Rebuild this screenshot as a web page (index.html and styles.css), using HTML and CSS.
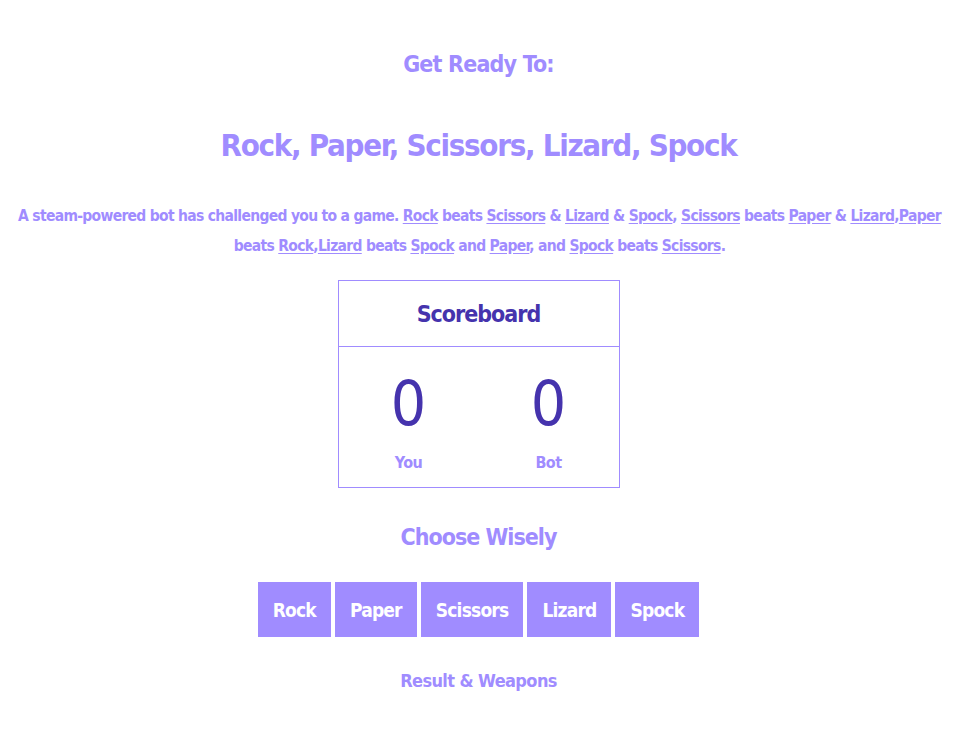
FILE: index.html
```html
<!DOCTYPE html>
<html>
<head>
<meta charset="utf-8">
<link rel="stylesheet" href="styles.css">
</head>
<body>
<main class="page">
  <h2 class="pre">Get Ready To:</h2>
  <h1 class="title">Rock, Paper, Scissors, Lizard, Spock</h1>
  <p class="rules">A steam-powered bot has challenged you to a game. <u>Rock</u> beats <u>Scissors</u> &amp; <u>Lizard</u> &amp; <u>Spock</u>, <u>Scissors</u> beats <u>Paper</u> &amp; <u>Lizard</u>,<u>Paper</u> beats <u>Rock</u>,<u>Lizard</u> beats <u>Spock</u> and <u>Paper</u>, and <u>Spock</u> beats <u>Scissors</u>.</p>
  <section class="board">
    <div class="board-head">Scoreboard</div>
    <div class="board-body">
      <div class="score"><div class="num">0</div><div class="who">You</div></div>
      <div class="score"><div class="num">0</div><div class="who">Bot</div></div>
    </div>
  </section>
  <h3 class="choose">Choose Wisely</h3>
  <div class="buttons">
    <button class="btn">Rock</button>
    <button class="btn">Paper</button>
    <button class="btn">Scissors</button>
    <button class="btn">Lizard</button>
    <button class="btn">Spock</button>
  </div>
  <h4 class="result">Result &amp; Weapons</h4>
</main>
</body>
</html>
```
FILE: styles.css
```css
* { box-sizing: border-box; }
body {
  margin: 0;
  background: #fff;
  font-family: "DejaVu Sans Condensed", "Liberation Sans", sans-serif;
  font-weight: bold;
  color: #a08cff;
}
.page {
  display: flex;
  flex-direction: column;
  align-items: center;
  text-align: center;
  padding: 44px 5px 0 0;
}
.pre {
  margin: 0;
  font-size: 23px;
  line-height: 40px;
  letter-spacing: -0.8px;
}
.title {
  margin: 36px 0 0;
  font-size: 31px;
  line-height: 50px;
  letter-spacing: -1.3px;
}
.rules {
  margin: 31px 8px 0 10px;
  font-size: 15.5px;
  line-height: 30px;
  letter-spacing: -0.7px;
}
.rules u { text-underline-offset: 2px; }
.board {
  margin-top: 19px;
  width: 282px;
  border: 1px solid #a08cff;
}
.board-head {
  height: 66px;
  display: flex;
  align-items: center;
  justify-content: center;
  border-bottom: 1px solid #a08cff;
  color: #4533ad;
  font-size: 23px;
  letter-spacing: -1px;
}
.board-body {
  display: grid;
  grid-template-columns: 1fr 1fr;
  padding: 22px 0 9px;
}
.score { display: flex; flex-direction: column; align-items: center; gap: 9px; }
.num {
  color: #4533ad;
  font-size: 62px;
  line-height: 70px;
  font-weight: normal;
}
.who {
  font-size: 16px;
  line-height: 30px;
  letter-spacing: -0.5px;
}
.choose {
  margin: 29px 0 0;
  font-size: 23px;
  line-height: 40px;
  letter-spacing: -1px;
}
.buttons {
  margin-top: 25px;
  display: flex;
  gap: 4px;
}
.btn {
  border: 0;
  background: #a08cff;
  color: #fff;
  font-family: inherit;
  font-weight: bold;
  font-size: 19px;
  letter-spacing: -0.8px;
  height: 55px;
  padding: 0 15px;
}
.result {
  margin: 29px 0 0;
  font-size: 18px;
  line-height: 30px;
  letter-spacing: -0.6px;
}
```
